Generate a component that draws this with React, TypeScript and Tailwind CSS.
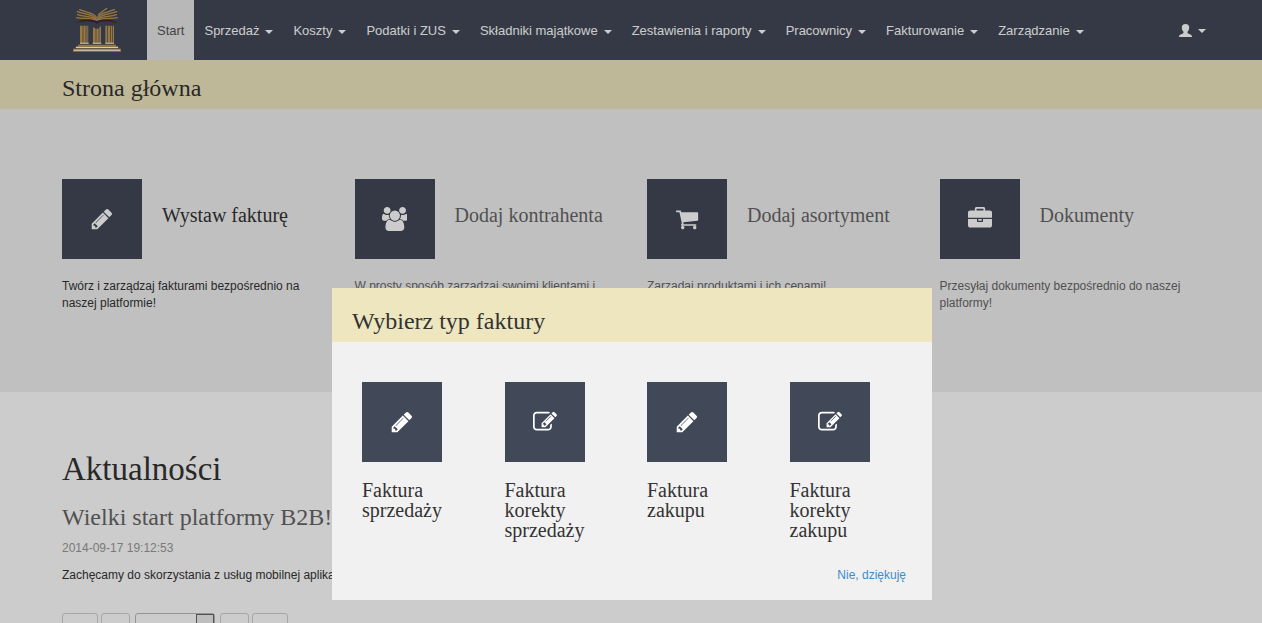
import { useState } from "react";
import type { ReactNode } from "react";

const NAV_ITEMS = [
  "Sprzedaż",
  "Koszty",
  "Podatki i ZUS",
  "Składniki majątkowe",
  "Zestawienia i raporty",
  "Pracownicy",
  "Fakturowanie",
  "Zarządzanie",
];

function Glyph({ width, d }: { width: number; d: string }) {
  return (
    <svg
      viewBox={`0 0 ${width} 1792`}
      className="h-6 w-auto fill-current"
      aria-hidden="true"
    >
      <path d={d} />
    </svg>
  );
}

function PencilIcon() {
  return (
    <Glyph
      width={1792}
      d="M491 1536l91-91-235-235-91 91v107h128v128h107zm523-928q0-22-22-22-10 0-17 7l-542 542q-7 7-7 17 0 22 22 22 10 0 17-7l542-542q7-7 7-17zm-54-192l416 416-832 832h-416v-416zm683 96q0 53-37 90l-166 166-416-416 166-165q36-38 90-38 53 0 91 38l235 234q37 39 37 91z"
    />
  );
}

function EditIcon() {
  return (
    <Glyph
      width={1792}
      d="M888 1184l116-116-152-152-116 116v56h96v96h56zm440-720q-16-16-33 1l-350 350q-17 17-1 33t33-1l350-350q17-17 1-33zm80 594v190q0 119-84.5 203.5t-203.5 84.5h-832q-119 0-203.5-84.5t-84.5-203.5v-832q0-119 84.5-203.5t203.5-84.5h832q63 0 117 25 15 7 18 23 3 17-9 29l-49 49q-14 14-32 8-23-6-45-6h-832q-66 0-113 47t-47 113v832q0 66 47 113t113 47h832q66 0 113-47t47-113v-126q0-13 9-22l64-64q15-15 35-7t20 29zm-96-738l288 288-672 672h-288v-288zm444 132l-92 92-288-288 92-92q28-28 68-28t68 28l152 152q28 28 28 68t-28 68z"
    />
  );
}

function UsersIcon() {
  return (
    <Glyph
      width={1920}
      d="M593 896q-162 5-265 128h-134q-82 0-138-40.5t-56-118.5q0-353 124-353 6 0 43.5 21t97.5 42.5 119 21.5q67 0 133-23-5 37-5 66 0 159 93 256zm1071 637q0 120-73 189.5t-194 69.5h-874q-121 0-194-69.5t-73-189.5q0-53 3.5-103.5t14-109 26.5-108.5 43-97.5 62-81 85.5-53.5 111.5-20q10 0 43 21.5t73 48 107 48 135 21.5 135-21.5 107-48 73-48 43-21.5q61 0 111.5 20t85.5 53.5 62 81 43 97.5 26.5 108.5 14 109 3.5 103.5zm-1024-1277q0 106-75 181t-181 75-181-75-75-181 75-181 181-75 181 75 75 181zm704 384q0 159-112.5 271.5t-271.5 112.5-271.5-112.5-112.5-271.5 112.5-271.5 271.5-112.5 271.5 112.5 112.5 271.5zm576 225q0 78-56 118.5t-138 40.5h-134q-103-123-265-128 93-97 93-256 0-29-5-66 66 23 133 23 59 0 119-21.5t97.5-42.5 43.5-21q124 0 124 353zm-128-609q0 106-75 181t-181 75-181-75-75-181 75-181 181-75 181 75 75 181z"
    />
  );
}

function CartIcon() {
  return (
    <Glyph
      width={1792}
      d="M704 1536q0 52-38 90t-90 38-90-38-38-90 38-90 90-38 90 38 38 90zm896 0q0 52-38 90t-90 38-90-38-38-90 38-90 90-38 90 38 38 90zm128-1088v512q0 24-16.5 42.5t-40.5 21.5l-1044 122q13 60 13 70 0 16-24 64h920q26 0 45 19t19 45-19 45-45 19h-1024q-26 0-45-19t-19-45q0-11 8-31.5t16-36 21.5-40 15.5-29.5l-177-823h-204q-26 0-45-19t-19-45 19-45 45-19h256q16 0 28.5 6.5t19.5 15.5 13 24.5 8 26 5.5 29.5 4.5 26h1201q26 0 45 19t19 45z"
    />
  );
}

function BriefcaseIcon() {
  return (
    <Glyph
      width={1792}
      d="M640 256h512v-128h-512v128zm1152 640v480q0 66-47 113t-113 47h-1472q-66 0-113-47t-47-113v-480h672v160q0 26 19 45t45 19h320q26 0 45-19t19-45v-160h672zm-768 0v128h-256v-128h256zm768-480v384h-1792v-384q0-66 47-113t113-47h352v-160q0-40 28-68t68-28h576q40 0 68 28t28 68v160h352q66 0 113 47t47 113z"
    />
  );
}

function UserIcon() {
  return (
    <svg viewBox="0 0 13 13" className="h-[13px] w-[13px] fill-current" aria-hidden="true">
      <path d="M6.5 0C9 0 10.200 1.400 10.200 3.600c0 1.900-.8 3.300-1.700 4.200v1c0 .6 1.200 1 2.400 1.500 1.500.6 2.100 1.100 2.100 2.700H0c0-1.600.6-2.100 2.100-2.700C3.300 9.800 4.500 9.400 4.500 8.800V7.800C3.600 6.900 2.800 5.500 2.800 3.600 2.800 1.400 4 0 6.500 0z" />
    </svg>
  );
}

/* Open book resting on three columns */
function Logo() {
  return (
    <svg viewBox="0 0 144 132" className="h-11 w-12" fill="none" aria-hidden="true">
      <g stroke="#c0964f" strokeWidth="4" strokeLinecap="round">
        <path d="M71 36C64 20 42 20 13 11" />
        <path d="M70 28C62 14 46 16 20 5" />
        <path d="M70 34C54 22 34 28 14 20" />
        <path d="M69 36C52 27 32 34 11 29" />
        <path d="M73 36C80 20 102 20 131 11" />
        <path d="M74 28C82 14 98 16 124 5" />
        <path d="M76 20C84 12 94 8 101 1" />
        <path d="M74 34C90 22 110 28 130 20" />
        <path d="M75 36C92 27 112 34 133 29" />
      </g>
      <path
        d="M7 45C28 33 54 32 71 40C90 32 116 33 135 45C112 39 90 39 78 43L71 48L65 43C50 39 28 40 7 45Z"
        fill="#4b2428"
      />
      <g fill="#c0964f">
        <path d="M21 53h8v52h-8zM31 53h7v52h-7zM40 53h4v52h-4z" />
        <path d="M60 57l8 5v43h-8zM70 62h7v43h-7zM79 58l5-3v50h-5z" />
        <path d="M98 53h5v52h-5zM105 53h7v52h-7zM114 53h4v52h-4zM120 53h3v52h-3z" />
        <path d="M15 110h114v5H15zM8 115h128v6H8zM0 122h144v9H0z" />
      </g>
      <g fill="#8b8580">
        <path d="M44 53h2v52h-2zM77 60h2v45h-2zM96 53h2v52h-2z" />
      </g>
      <g fill="#fff">
        <path d="M21 104h26v3H21zM59 104h26v3H59zM97 104h26v3H97z" />
        <path d="M9 117h126v3H9zM3 125h138v3H3z" />
      </g>
    </svg>
  );
}

function Caret() {
  return (
    <svg viewBox="0 0 8 4" className="mt-0.5 h-1 w-2 fill-current" aria-hidden="true">
      <path d="M0 0h8L4 4z" />
    </svg>
  );
}

function IconBox({ children }: { children: ReactNode }) {
  return (
    <span className="flex h-20 w-20 shrink-0 items-center justify-center bg-[#414857] text-white">
      {children}
    </span>
  );
}

const SERVICES = [
  {
    title: "Wystaw fakturę",
    text: "Twórz i zarządzaj fakturami bezpośrednio na naszej platformie!",
    icon: <PencilIcon />,
    active: true,
  },
  {
    title: "Dodaj kontrahenta",
    text: "W prosty sposób zarządzaj swoimi klientami i",
    icon: <UsersIcon />,
    active: false,
  },
  {
    title: "Dodaj asortyment",
    text: "Zarządaj produktami i ich cenami!",
    icon: <CartIcon />,
    active: false,
  },
  {
    title: "Dokumenty",
    text: "Przesyłaj dokumenty bezpośrednio do naszej platformy!",
    icon: <BriefcaseIcon />,
    active: false,
  },
];

const INVOICE_TYPES = [
  { title: "Faktura sprzedaży", icon: <PencilIcon /> },
  { title: "Faktura korekty sprzedaży", icon: <EditIcon /> },
  { title: "Faktura zakupu", icon: <PencilIcon /> },
  { title: "Faktura korekty zakupu", icon: <EditIcon /> },
];

function Navbar() {
  return (
    <header className="bg-[#414857] text-[13px] text-white">
      <div className="mx-auto flex h-[60px] max-w-[1170px] items-stretch">
        <a href="#" aria-label="Strona główna" className="flex w-[101px] items-center pl-[27px]">
          <Logo />
        </a>
        <nav className="flex flex-1 items-stretch whitespace-nowrap">
          <a href="#" className="flex items-center bg-[#e7e7e7] px-2.5 pt-0.5 text-[#555]">
            Start
          </a>
          {NAV_ITEMS.map((item) => (
            <button key={item} type="button" className="flex items-center gap-1.5 px-2.5 pt-0.5">
              {item}
              <Caret />
            </button>
          ))}
        </nav>
        <button type="button" aria-label="Konto" className="flex items-center gap-1.5 px-2.5">
          <UserIcon />
          <Caret />
        </button>
      </div>
    </header>
  );
}

function Services() {
  return (
    <section className="bg-[#f1f1f1]">
      <div className="mx-auto grid min-h-[283px] max-w-[1170px] grid-cols-4 pt-[70px]">
        {SERVICES.map((service) => (
          <a
            key={service.title}
            href="#"
            className={service.active ? "px-4 text-[#333]" : "px-4 text-[#666]"}
          >
            <div className="flex gap-5">
              <IconBox>{service.icon}</IconBox>
              <h3 className="pt-6 font-['Liberation_Serif',serif] text-[20px] leading-6">
                {service.title}
              </h3>
            </div>
            <p className="pt-[19px] text-[12px] leading-[17px]">{service.text}</p>
          </a>
        ))}
      </div>
    </section>
  );
}

function Pagination() {
  const pageButton = "h-[30px] rounded-[3px] border border-[#d0d0d0]";
  return (
    <div className="flex pt-[29px] text-[12px] text-[#666]">
      <button type="button" aria-label="Pierwsza strona" className={`${pageButton} mr-[3px] w-9`} />
      <button type="button" aria-label="Poprzednia strona" className={`${pageButton} mr-[5px] w-[29px]`} />
      <div className="mr-[5px] flex h-[30px] w-20 rounded-[3px] border border-[#bbb]">
        <select aria-label="Strona" className="min-w-0 flex-1 appearance-none bg-transparent" />
        <span className="w-[18px] border border-[#666] bg-[#eee]" />
      </div>
      <button type="button" aria-label="Następna strona" className={`${pageButton} mr-[3px] w-[29px]`} />
      <button type="button" aria-label="Ostatnia strona" className={`${pageButton} w-9`} />
    </div>
  );
}

function News() {
  return (
    <section className="mx-auto max-w-[1170px] px-4 pt-[59px]">
      <h2 className="font-['Liberation_Serif',serif] text-[33px] leading-9 text-[#333]">
        Aktualności
      </h2>
      <h3 className="pt-4 font-['Liberation_Serif',serif] text-[24px] leading-7 text-[#666]">
        Wielki start platformy B2B!
      </h3>
      <p className="pt-2 text-[12px] leading-[18px] text-[#999]">2014-09-17 19:12:53</p>
      <p className="pt-[9px] text-[12px] leading-[18px] text-[#333]">
        Zachęcamy do skorzystania z usług mobilnej aplikacji platformy B2B.
      </p>
      <Pagination />
    </section>
  );
}

function InvoiceDialog({ onClose }: { onClose: () => void }) {
  return (
    <div className="fixed inset-0 flex items-start justify-center bg-black/20 pt-72 pl-0.5">
      <div
        role="dialog"
        aria-modal="true"
        aria-labelledby="invoice-dialog-title"
        className="w-full max-w-[600px] bg-[#f1f1f1] text-[#333]"
      >
        <h2
          id="invoice-dialog-title"
          className="bg-[#eee6bf] px-5 pt-[19px] pb-[7px] font-['Liberation_Serif',serif] text-[24px] leading-7"
        >
          Wybierz typ faktury
        </h2>
        <div className="grid grid-cols-4 pt-10 pl-[30px]">
          {INVOICE_TYPES.map((type) => (
            <a key={type.title} href="#" className="pr-[30px]">
              <IconBox>{type.icon}</IconBox>
              <h3 className="pt-[18px] font-['Liberation_Serif',serif] text-[20px] leading-5">
                {type.title}
              </h3>
            </a>
          ))}
        </div>
        <div className="flex justify-end px-[26px] pt-[26px] pb-4">
          <button type="button" onClick={onClose} className="text-[12px] leading-[18px] text-[#428bca]">
            Nie, dziękuję
          </button>
        </div>
      </div>
    </div>
  );
}

export default function App() {
  const [dialogOpen, setDialogOpen] = useState(true);

  return (
    <div className="h-screen overflow-hidden bg-white font-['Liberation_Sans',Arial,sans-serif]">
      <Navbar />
      <div className="bg-[#eee6bf]">
        <h1 className="mx-auto max-w-[1170px] px-4 pt-3.5 pb-[7px] font-['Liberation_Serif',serif] text-[24px] leading-7 text-[#333]">
          Strona główna
        </h1>
      </div>
      <Services />
      <News />
      {dialogOpen && <InvoiceDialog onClose={() => setDialogOpen(false)} />}
    </div>
  );
}
